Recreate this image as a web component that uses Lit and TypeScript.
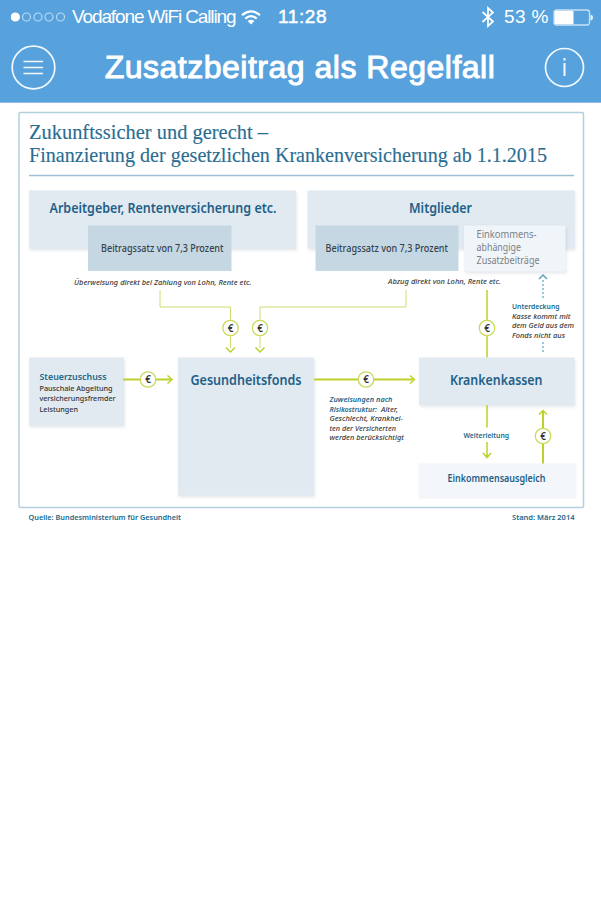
import { LitElement, html, svg, css } from "lit";
import { customElement } from "lit/decorators.js";

// [class, x, baseline, width, text]
type Label = [string, number, number, number, string];

const LABELS: Label[] = [
  ["headline", 29, 139, 239, "Zukunftssicher und gerecht –"],
  ["headline", 29, 161.5, 518, "Finanzierung der gesetzlichen Krankenversicherung ab 1.1.2015"],
  ["node", 49.5, 213, 227, "Arbeitgeber, Rentenversicherung etc."],
  ["node", 409, 213, 63, "Mitglieder"],
  ["rate", 101, 251.5, 122.5, "Beitragssatz von 7,3 Prozent"],
  ["rate", 325.5, 251.5, 122.5, "Beitragssatz von 7,3 Prozent"],
  ["extra", 476.5, 237.5, 60, "Einkommens-"],
  ["extra", 476.5, 251, 44.5, "abhängige"],
  ["extra", 476.5, 264, 63, "Zusatzbeiträge"],
  ["note", 74, 284.5, 177.5, "Überweisung direkt bei Zahlung von Lohn, Rente etc."],
  ["note", 388, 283.5, 113, "Abzug direkt von Lohn, Rente etc."],
  ["key small", 512, 308.5, 47.5, "Unterdeckung"],
  ["note", 512, 318.5, 58.5, "Kasse kommt mit"],
  ["note", 512, 328, 62, "dem Geld aus dem"],
  ["note", 512, 337.5, 53, "Fonds nicht aus"],
  ["tax", 39.5, 380, 67, "Steuerzuschuss"],
  ["plain", 39.5, 390.5, 73, "Pauschale Abgeltung"],
  ["plain", 39.5, 401, 76, "versicherungsfremder"],
  ["plain", 39.5, 412, 38.5, "Leistungen"],
  ["node", 190.5, 385, 111, "Gesundheitsfonds"],
  ["node", 450, 385, 92.5, "Krankenkassen"],
  ["key small slant", 329.5, 402, 63, "Zuweisungen nach"],
  ["key small slant", 329.5, 411.5, 47.5, "Risikostruktur:"],
  ["note", 381, 411.5, 17, "Alter,"],
  ["note", 329.5, 421, 73.5, "Geschlecht, Krankhei-"],
  ["note", 329.5, 430.5, 66.5, "ten der Versicherten"],
  ["note", 329.5, 440, 74.5, "werden berücksichtigt"],
  ["key small", 463.5, 438, 45.5, "Weiterleitung"],
  ["balance", 447.5, 482, 98, "Einkommensausgleich"],
  ["key source", 28.5, 520, 152.5, "Quelle: Bundesministerium für Gesundheit"],
  ["key source", 512, 520, 62.5, "Stand: März 2014"],
];

// [class, x, y, width, height]
const BOXES: [string, number, number, number, number][] = [
  ["box", 29, 190.5, 267, 58],
  ["box", 307.5, 190.5, 267, 58],
  ["box deep", 88, 225.5, 143.5, 45.5],
  ["box deep", 315.5, 225.5, 143, 45.5],
  ["box pale", 464, 225.5, 101.5, 46],
  ["box", 29, 357.5, 95, 68],
  ["box", 178, 357.5, 136, 138],
  ["box", 419, 357.5, 155.5, 47.5],
  ["box faint", 419, 463.5, 157, 33.5],
];

const FLOWS: [string, string][] = [
  ["flow thin", "M160 290V307H230.500V348"],
  ["flow thin", "M406 290V307H260V348"],
  ["flow mid", "M226 347.500L230.500 352L235 347.500M255.500 347.500L260 352L264.500 347.500"],
  ["flow mid", "M487 290V357.500M487 405V427.500M487 442V457M483 453L487 457.500L491 453"],
  ["flow thick", "M123 379.500H171"],
  ["flow mid", "M167.500 375.500L172 379.500L167.500 383.500"],
  ["flow thick", "M314 379.500H413"],
  ["flow mid", "M410 375.500L414.500 379.500L410 383.500"],
  ["flow thick", "M543 463.500V411"],
  ["flow mid", "M539 414.500L543 410.500L547 414.500"],
  ["deficit", "M543 298V278M543 352V341"],
  ["deficit tip", "M539 279L543 275L547 279"],
];

const COINS = [
  [230.5, 328], [260, 328], [487, 328], [148, 379.5], [366, 379.5], [543, 436],
];

@customElement("funding-chart")
export class FundingChart extends LitElement {
  static styles = css`
    :host { display: block; }
    .chart { display: block; width: 601px; height: 427px; font-family: "Noto Sans", "Open Sans", sans-serif; }
    .frame { fill: #fff; stroke: #b3d0de; stroke-width: 1.5; }
    .rule { stroke: #9dbfd4; stroke-width: 1.3; }
    .box { fill: #e1eaf1; filter: drop-shadow(1px 2px 1.5px rgba(70, 90, 110, 0.14)); }
    .deep { fill: #c5d7e3; filter: none; }
    .pale { fill: #f0f5f9; }
    .faint { fill: #f3f6fa; filter: drop-shadow(0 1px 1px rgba(70, 90, 110, 0.1)); }
    .flow { fill: none; stroke: #bdd02b; }
    .thin { stroke-width: 1; stroke: #d0dc70; }
    .mid { stroke-width: 1.5; }
    .thick { stroke-width: 2; }
    .deficit { fill: none; stroke: #58a3b7; stroke-width: 1.2; stroke-dasharray: 2 2; }
    .tip { stroke-dasharray: none; stroke-width: 1.5; }
    .coin { fill: #fff; stroke: #cbd95d; stroke-width: 1.3; }
    .euro { font-size: 10px; font-weight: 600; fill: #333; text-anchor: middle; }
    .headline { font-family: "Liberation Serif", serif; font-size: 21px; fill: #2a6d92; stroke: #2a6d92; stroke-width: 0.15; }
    .node { font-size: 13.5px; font-weight: 600; fill: #1f6088; }
    .rate { font-size: 10px; font-weight: 500; fill: #36434e; }
    .extra { font-size: 10px; fill: #7b8187; }
    .note { font-size: 7.5px; font-style: italic; font-weight: 500; fill: #3a3a3a; }
    .plain { font-size: 7.8px; font-weight: 500; fill: #333; }
    .key { fill: #21688c; font-weight: 600; }
    .small { font-size: 7.5px; }
    .slant { font-style: italic; }
    .tax { font-size: 9.5px; font-weight: 600; fill: #21688c; }
    .balance { font-size: 11px; font-weight: 600; fill: #1f6088; }
    .source { font-size: 7.5px; font-weight: 600; }
  `;

  render() {
    return html`
      <svg class="chart" viewBox="0 103 601 427">
        <rect class="frame" x="19" y="112.500" width="564.500" height="395" rx="1.500" />
        <path class="rule" d="M29 175.500H574" />
        ${BOXES.map(([c, x, y, w, h]) => svg`<rect class=${c} x=${x} y=${y} width=${w} height=${h} />`)}
        ${FLOWS.map(([c, d]) => svg`<path class=${c} d=${d} />`)}
        ${COINS.map(([x, y]) => svg`
          <circle class="coin" cx=${x} cy=${y} r="7.700" />
          <text class="euro" x=${x} y=${y + 3.6}>€</text>`)}
        ${LABELS.map(([c, x, y, w, t]) => svg`
          <text class=${c} x=${x} y=${y} textLength=${w} lengthAdjust="spacingAndGlyphs">${t}</text>`)}
      </svg>
    `;
  }
}

@customElement("app-root")
export class AppRoot extends LitElement {
  static styles = css`
    :host { display: block; min-height: 900px; background: #fff; font-family: "Liberation Sans", Arial, sans-serif; }
    .top { height: 103px; background: #57a2dd; color: #fff; border-bottom: 1px solid #8fbfe6; box-sizing: border-box; }
    .status { display: flex; align-items: center; height: 34px; padding: 0 7px 0 11px; }
    .dots { width: 56px; height: 12px; }
    .dot { fill: none; stroke: #b9d8f1; stroke-width: 1.2; }
    .on { fill: #fff; stroke: #fff; }
    .carrier { margin-left: 5px; width: 165px; font-size: 19px; letter-spacing: -1.12px; white-space: nowrap; }
    .wifi { width: 20px; height: 15px; margin-left: 4px; }
    .clock { margin-left: 17px; width: 51px; font-size: 19px; letter-spacing: 0.6px; -webkit-text-stroke: 0.5px #fff; white-space: nowrap; }
    .bluetooth { width: 14px; height: 22px; margin-left: auto; }
    .percent { margin-left: 9px; width: 45px; font-size: 19px; letter-spacing: 0.4px; white-space: nowrap; }
    .battery { width: 41px; height: 17px; margin-left: 4px; }
    .nav { display: flex; align-items: center; justify-content: space-between; height: 66px; padding: 0 16px 0 11px; }
    .title { margin: 0; font-size: 32px; font-weight: 400; letter-spacing: 0.5px; -webkit-text-stroke: 1px #fff; white-space: nowrap; }
    .menu { width: 45px; height: 45px; }
    .info { width: 41px; height: 41px; }
    .line { fill: none; stroke: #f3f9fe; stroke-width: 1.7; }
  `;

  render() {
    return html`
      <header class="top">
        <div class="status">
          <svg class="dots" viewBox="0 0 56 12">
            <circle class="dot on" cx="4.300" cy="6" r="4" />
            ${[15.5, 27, 38, 49.5].map((x) => svg`<circle class="dot" cx=${x} cy="6" r="4" />`)}
          </svg>
          <span class="carrier">Vodafone WiFi Calling</span>
          <svg class="wifi" viewBox="0 0 20 15" fill="none" stroke="#fff" stroke-width="2.200">
            <path d="M1 5.200Q10-2.600 19 5.200" />
            <path d="M4.300 8.600Q10 3.800 15.700 8.600" />
            <path d="M10 14.500L6.600 11.100Q10 8.200 13.400 11.100Z" fill="#fff" stroke="none" />
          </svg>
          <span class="clock">11:28</span>
          <svg class="bluetooth" viewBox="0 0 14 22" fill="none" stroke="#fff" stroke-width="1.700">
            <path d="M1.500 6L12 15.500L7 20V2L12 6.500L1.500 16" />
          </svg>
          <span class="percent">53 %</span>
          <svg class="battery" viewBox="0 0 41 17">
            <rect x="1" y="1" width="35.500" height="15" rx="2.500" fill="none" stroke="#c8e1f6" stroke-width="1.300" />
            <rect x="1.500" y="1.800" width="19" height="13.400" rx="1" fill="#fff" />
            <path d="M37.500 5.500Q40 6 40 8.500T37.500 11.500Z" fill="#e7f3fd" />
          </svg>
        </div>
        <div class="nav">
          <svg class="menu line" viewBox="0 0 45 45">
            <circle cx="22.500" cy="22.500" r="21.300" />
            <path d="M12.500 16.500H32M12.500 22.500H32M12.500 28.500H32" />
          </svg>
          <h1 class="title">Zusatzbeitrag als Regelfall</h1>
          <svg class="info line" viewBox="0 0 41 41">
            <circle cx="20.500" cy="20.500" r="19" />
            <path d="M20.500 16V29M20.500 11V13.500" stroke-width="2" />
          </svg>
        </div>
      </header>
      <funding-chart></funding-chart>
    `;
  }
}
